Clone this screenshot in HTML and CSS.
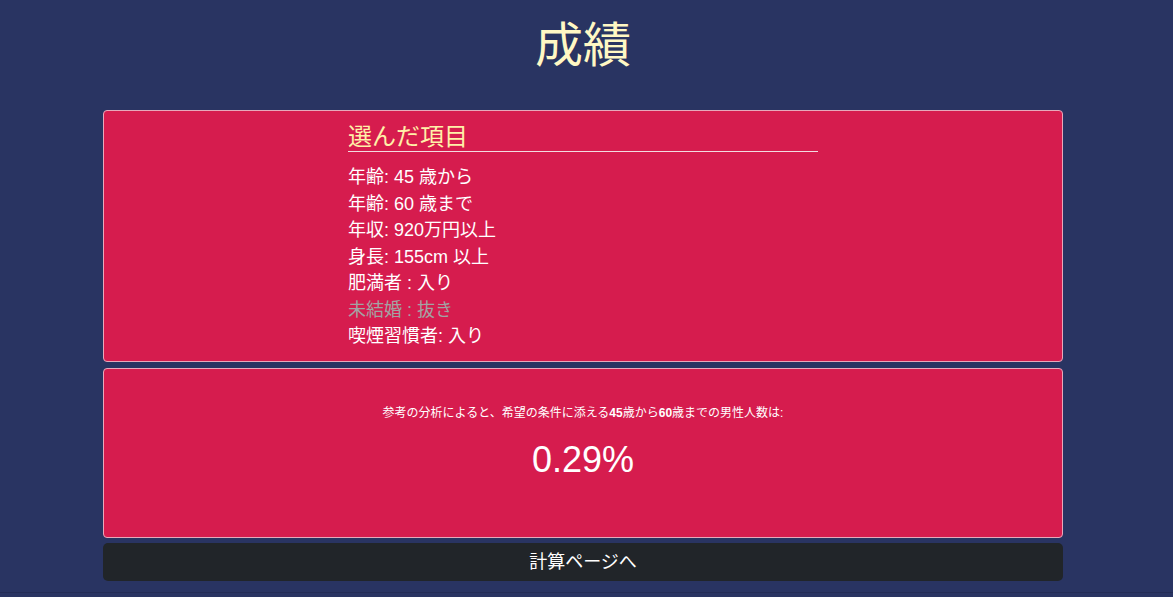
FILE: index.html
```html
<!DOCTYPE html>
<html lang="ja">
<head>
<meta charset="utf-8">
<title>成績</title>
<link rel="stylesheet" href="styles.css">
</head>
<body>
<div class="page">
  <h1 class="title">成績</h1>
  <div class="wrap">
    <section class="card card-choices">
      <div class="choices">
        <h2 class="choices-head">選んだ項目</h2>
        <ul class="choice-list">
          <li>年齢: 45 歳から</li>
          <li>年齢: 60 歳まで</li>
          <li>年収: 920万円以上</li>
          <li>身長: 155cm 以上</li>
          <li>肥満者 : 入り</li>
          <li class="off">未結婚 : 抜き</li>
          <li>喫煙習慣者: 入り</li>
        </ul>
      </div>
    </section>
    <section class="card card-result">
      <p class="result-note">参考の分析によると、希望の条件に添える<b>45</b>歳から<b>60</b>歳までの男性人数は:</p>
      <p class="result-value">0.29%</p>
    </section>
    <a class="back-btn" href="#">計算ページへ</a>
  </div>
  <div class="footer-line"></div>
</div>
</body>
</html>
```
FILE: styles.css
```css
html, body {
  margin: 0;
  padding: 0;
  background: #293462;
}
body {
  font-family: "Liberation Sans", "Noto Sans CJK JP", sans-serif;
  color: #ffffff;
}
.page {
  padding-right: 7px;
}
.title {
  margin: 17px 0 35px;
  font-size: 48px;
  line-height: 58px;
  font-weight: normal;
  text-align: center;
  color: #fff8c4;
}
.wrap {
  width: 960px;
  margin: 0 auto;
}
.card {
  background: #d61c4e;
  border: 1px solid #e7a9bb;
  border-radius: 4px;
}
.card-choices {
  padding: 11px 0 11.5px;
}
.choices {
  width: 470px;
  margin: 0 auto;
}
.choices-head {
  margin: 0;
  font-size: 24px;
  line-height: 29px;
  font-weight: normal;
  color: #fff0a8;
  border-bottom: 1px solid #f3dbe1;
}
.choice-list {
  list-style: none;
  margin: 12px 0 0;
  padding: 0;
  font-size: 18px;
  line-height: 26.5px;
  color: #ffffff;
}
.choice-list .off {
  color: #a3a3a3;
}
.card-result {
  margin-top: 6px;
  padding: 35px 0 55px;
  text-align: center;
}
.result-note {
  margin: 0;
  font-size: 12px;
  line-height: 18px;
}
.result-note b {
  font-weight: bold;
}
.result-value {
  margin: 16px 0 0;
  font-size: 36px;
  line-height: 44px;
}
.back-btn {
  display: block;
  margin-top: 5px;
  height: 38px;
  line-height: 38px;
  background: #212529;
  border-radius: 5px;
  color: #ffffff;
  font-size: 18px;
  text-align: center;
  text-decoration: none;
}
.footer-line {
  margin-top: 11px;
  margin-right: -7px;
  border-top: 1px solid #232c55;
  height: 20px;
}
```
